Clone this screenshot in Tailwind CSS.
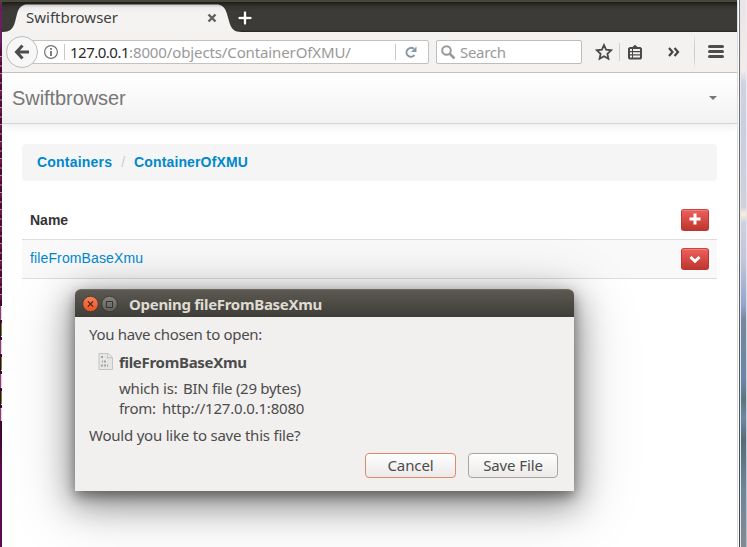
<!DOCTYPE html>
<html lang="en">
<head>
<meta charset="utf-8">
<title>Swiftbrowser</title>
<script src="https://cdn.jsdelivr.net/npm/@tailwindcss/browser@4"></script>
</head>
<body class="w-[747px] h-[547px] overflow-hidden bg-white font-['Noto_Sans','Open_Sans',sans-serif] text-[15px] leading-5 text-[#4c4c4c]">
<div class="relative flex w-[747px] h-[547px] overflow-hidden">

  <!-- desktop edge, left -->
  <div class="w-[2px] shrink-0 bg-[linear-gradient(#4a4840_0_2px,#6b1d5e_5px,#6d1f63_40px,#4a0a3f_55px,#3c0630_340px,#3f0734_440px,#5c0b50_470px,#5c0b50)]">
    <div class="mt-[50px] h-[250px] w-[2px] bg-[repeating-linear-gradient(#48103c_0_6px,#d8c4d2_6px_7px,#7a1f4c_7px_12px,#48103c_12px_15px,#b5627a_15px_17px)] opacity-70"></div>
    <div class="mt-[6px] flex h-[115px] w-[2px]">
      <div class="w-px bg-[repeating-linear-gradient(#7a3ab0_0_14px,#3c0630_14px_34px)]"></div>
      <div class="w-px bg-[repeating-linear-gradient(#fff_0_1px,#f9cf9c_1px_13px,#fff_13px_14px,#3c0630_14px_17px,#6a8a2a_17px_30px,#fff_30px_31px,#3c0630_31px_34px)]"></div>
    </div>
  </div>

  <!-- browser window -->
  <div class="w-[735px] shrink-0 flex flex-col">
    <!-- tab strip -->
    <div class="h-8 shrink-0 relative border-t-2 border-[#48473e] bg-[linear-gradient(#1d1c19,#33322d_4px,#3c3b37_9px,#3c3b37_28px,#24231f_30px)]">
      <svg class="absolute left-0 top-0" width="260" height="30" viewBox="0 0 260 30">
        <defs><linearGradient id="tab" x1="0" y1="0" x2="0" y2="1"><stop offset="0" stop-color="#c9c8c6"/><stop offset=".12" stop-color="#eeedec"/><stop offset=".3" stop-color="#f4f3f2"/><stop offset="1" stop-color="#f4f3f2"/></linearGradient></defs>
        <path d="M0 30C8 30 11 27 13 20L15 12C17 5 20 2.500 26 2.500H214C220 2.500 223 5 225 12L227 19C229 27 232 30 240 30Z" fill="url(#tab)"/>
        <path d="M206.500 12.500l7 7M213.500 12.500l-7 7" stroke="#5f5f5d" stroke-width="2.400"/>
        <path d="M243 9v14M236 16h14" stroke="#1f1e1c" stroke-width="4.500"/>
        <path d="M243 9.500v13M236.500 16h13" stroke="#fff" stroke-width="2.500"/>
      </svg>
      <div class="relative pl-6 pt-[5px] text-[15px] leading-5 text-[#3f3f3f] whitespace-nowrap">Swiftbrowser</div>
    </div>

    <!-- toolbar -->
    <div class="h-[41px] shrink-0 bg-[#f3f2f1] border-b border-[#c3c2c0] flex items-start pl-1 whitespace-nowrap">
      <div class="relative z-10 mt-1 w-8 h-8 shrink-0 rounded-full border border-[#bdbcba] bg-[#f8f7f7] flex items-center justify-center">
        <svg width="16" height="16" viewBox="0 0 16 16" fill="none" stroke="#4d4d4d" stroke-width="3"><path d="M8.500 1.500L2.500 8l6 6.500M3 8h12"/></svg>
      </div>
      <div class="-ml-[6px] mt-2 h-6 w-[397px] shrink-0 border border-[#c3c2c0] rounded-r-[2px] bg-white flex items-center pl-[10px]">
        <svg class="shrink-0" width="16" height="16" viewBox="0 0 16 16"><circle cx="8" cy="8" r="6.400" fill="none" stroke="#757575" stroke-width="1.200"/><path d="M8 7v5M8 4v1.800" stroke="#666" stroke-width="1.700"/></svg>
        <div class="ml-[5px] w-px h-4 bg-[#c8c8c8]"></div>
        <div class="ml-[5px] w-[325px] text-[15px] leading-5"><span class="text-[#2b2b2b] tracking-[-0.5px]">127.0.0.1</span><span class="text-[#999] tracking-[-0.12px]">:8000/objects/ContainerOfXMU/</span></div>
        <div class="w-px h-4 bg-[#c8c8c8]"></div>
        <svg class="ml-[8px]" width="14" height="14" viewBox="0 0 14 14"><path d="M10.500 10.200A4.500 4.500 0 1 1 9.800 3.800" fill="none" stroke="#8796a3" stroke-width="2"/><path d="M12.500 1.500V7H7Z" fill="#8796a3"/></svg>
      </div>
      <div class="ml-[7px] mt-2 h-6 w-[146px] shrink-0 border border-[#bfbebc] rounded-[2px] bg-white flex items-center pl-1">
        <svg width="15" height="15" viewBox="0 0 15 15" fill="none" stroke="#999"><circle cx="5.500" cy="5.500" r="4.300" stroke-width="2"/><path d="M8.500 8.500l5 5" stroke-width="2.500"/></svg>
        <div class="ml-1 leading-5 text-[#999] tracking-[-0.3px]">Search</div>
      </div>
      <svg class="ml-[13px] mt-[11px] shrink-0" width="18" height="18" viewBox="0 0 18 18"><path d="M9 2l2.100 4.700 5 .6-3.700 3.500 1 5L9 13.300 4.600 15.800l1-5L1.900 7.300l5-.6Z" fill="none" stroke="#4a4a4a" stroke-width="1.800"/></svg>
      <div class="ml-[6px] mt-[11px] w-px h-[18px] bg-[#cfcecc]"></div>
      <svg class="ml-[8px] mt-3 shrink-0" width="14" height="16" viewBox="0 0 14 16"><path d="M1.500 3H4.500L7 .8 9.500 3h3l1.500 1.500V14l-1 1.500H1L0 14V4.500Z" fill="#4a4a4a"/><path d="M2 5h2v2H2zM5 5h7v2H5zM2 8.200h2v2H2zM5 8.200h7v2H5zM2 11.400h2v2H2zM5 11.400h7v2H5z" fill="#f3f2f1"/></svg>
      <svg class="ml-[26px] mt-[15px] shrink-0" width="12" height="10" viewBox="0 0 12 10" fill="none" stroke="#444" stroke-width="2.200"><path d="M1 1l3.500 4L1 9M6.500 1L10 5 6.500 9"/></svg>
      <div class="ml-[14px] mt-[2px] w-px h-[35px] bg-[linear-gradient(#f3f2f1,#cfcecc_30%,#cfcecc_70%,#f3f2f1)]"></div>
      <svg class="ml-[13px] mt-[13px] shrink-0" width="17" height="13" viewBox="0 0 17 13"><path d="M1.500 1.500h13M1.500 6.500h13M1.500 11.500h13" stroke="#4d4d4d" stroke-width="3" stroke-linecap="round"/></svg>
    </div>

    <!-- page -->
    <div class="flex-1 min-h-0 bg-white overflow-hidden font-['Liberation_Sans',Arial,sans-serif] text-[14px]">
      <div class="h-[51px] flex items-center justify-between pl-[10px] pr-5 bg-[linear-gradient(#fff,#f2f2f2)] border-b border-[#d4d4d4] shadow-[0_1px_10px_rgba(0,0,0,0.1)]">
        <div class="text-[20px] text-[#777] tracking-[-0.07px]">Swiftbrowser</div>
        <svg width="8" height="4" viewBox="0 0 8 4"><path d="M0 0h8L4 4Z" fill="#777"/></svg>
      </div>
      <div class="mx-5 mt-5 h-[37px] rounded-[4px] bg-[#f5f5f5] px-[15px] pb-[2px] flex items-center font-bold text-[#0088cc]">
        <span class="tracking-[0.2px]">Containers</span><span class="mx-[9px] font-normal text-[#ccc]">/</span><span class="tracking-[0.14px]">ContainerOfXMU</span>
      </div>
      <div class="mx-5 mt-5 h-[38px] pl-2 pr-2 flex items-center justify-between font-bold text-[#333]">
        <span>Name</span>
        <div class="w-7 h-[22px] rounded-[3px] border border-[#bd362f] border-t-[#c9443d] bg-[linear-gradient(#ee5f5b,#bd362f)] shadow-[inset_0_1px_0_rgba(255,255,255,0.2)] flex items-center justify-center">
          <svg class="-mt-[2px]" width="12" height="12" viewBox="0 0 12 12"><path d="M6 .5v11M.5 6h11" stroke="#fff" stroke-width="3"/></svg>
        </div>
      </div>
      <div class="mx-5 h-10 pl-2 pr-2 flex items-center justify-between bg-[#f9f9f9] border-y border-[#ddd]">
        <span class="text-[#0088cc] -mt-[2px] tracking-[0.13px]">fileFromBaseXmu</span>
        <div class="w-7 h-[22px] rounded-[3px] border border-[#bd362f] border-t-[#c9443d] bg-[linear-gradient(#ee5f5b,#bd362f)] shadow-[inset_0_1px_0_rgba(255,255,255,0.2)] flex items-center justify-center">
          <svg width="12" height="9" viewBox="0 0 12 9"><path d="M1.500 2L6 6.300 10.500 2" fill="none" stroke="#fff" stroke-width="3"/></svg>
        </div>
      </div>
    </div>
  </div>

  <!-- desktop edge, right -->
  <div class="w-[10px] shrink-0 flex">
    <div class="w-px bg-[#dddcdc]"></div>
    <div class="w-px bg-white"></div>
    <div class="w-px bg-[linear-gradient(#74777a,#5c6068_50%,#3f4a58)]"></div>
    <div class="w-px bg-[#e4e6ea]"></div>
    <div class="w-[5px] bg-[linear-gradient(#e8e4ea,#f3e8e6_40px,#f3ece8_70px,#d0d3e0_83px,#c8cfe0_130px,#d0d0dd_207px,#fbeedd_214px,#cdd0de_223px,#c0c6de_260px,#94a5cc_305px,#74879f_320px,#6b86a5_380px,#5a7580_400px,#6d87a3_418px,#536c78_440px,#6d859b_490px,#85898f)]"></div>
    <div class="w-px bg-[linear-gradient(#f0eef0,#e0e2ea_50%,#b4bcc6)]"></div>
  </div>

  <!-- download dialog -->
  <div class="absolute left-[75px] top-[289px] w-[499px] h-[202px] rounded-t-[6px] bg-[#f1f0ef] shadow-[0_10px_32px_3px_rgba(0,0,0,0.4),0_12px_64px_8px_rgba(0,0,0,0.16),0_5px_12px_rgba(0,0,0,0.36)] whitespace-nowrap">
    <div class="h-7 rounded-t-[6px] bg-[linear-gradient(#5b5951,#3e3d38)] border-t border-[#6d6b62] flex items-center pl-[7px]">
      <svg width="36" height="18" viewBox="0 0 36 18">
        <defs><linearGradient id="c" x1="0" y1="0" x2="0" y2="1"><stop offset="0" stop-color="#f4845c"/><stop offset="1" stop-color="#e8501f"/></linearGradient><linearGradient id="m" x1="0" y1="0" x2="0" y2="1"><stop offset="0" stop-color="#85837b"/><stop offset="1" stop-color="#605e57"/></linearGradient></defs>
        <circle cx="8.500" cy="9" r="7.800" fill="url(#c)" stroke="#38352f" stroke-width=".8"/><path d="M5.900 6.400l5.200 5.200M11.100 6.400l-5.200 5.200" stroke="#4b2414" stroke-width="1.200"/>
        <circle cx="27.500" cy="9" r="7.800" fill="url(#m)" stroke="#38352f" stroke-width=".8"/><path d="M24.500 6.500h6v6h-6z" fill="none" stroke="#35342f" stroke-width="1"/>
      </svg>
      <div class="ml-[11px] font-bold text-[15px] tracking-[-0.3px] text-[#dfdbd2]">Opening fileFromBaseXmu</div>
    </div>
    <div class="pl-[14px] pt-[7px]">
      <div class="tracking-[-0.31px]">You have chosen to open:</div>
      <div class="mt-2 pl-[9px] h-5 flex items-center">
        <svg class="-mt-[2px]" width="15" height="17" viewBox="0 0 15 17"><path d="M1 .5h9.500l4 4v12H1Z" fill="#e6e6e5" stroke="#c4c4c3"/><path d="M9.500 1q1 3-.5 4 3-1 5 0" fill="#fafafa" stroke="#bcbcbb"/><g fill="none" stroke="#a4a4a3"><path d="M3 4h2M4 8.500h1M6 8.500h2M3 12.500h2M6 12.500h2M9 12.500h1" stroke-width="2"/></g></svg>
        <div class="ml-[6px] font-bold tracking-[-0.3px]">fileFromBaseXmu</div>
      </div>
      <div class="mt-[6px] pl-[30px] flex"><span class="w-16 tracking-[-0.2px]">which is:</span><span class="tracking-[-0.28px]">BIN file (29 bytes)</span></div>
      <div class="pl-[30px] flex"><span class="w-[43px] tracking-[-0.3px]">from:</span><span class="tracking-[-0.2px]">http://127.0.0.1:8080</span></div>
      <div class="mt-[7px] tracking-[-0.22px]">Would you like to save this file?</div>
    </div>
    <div class="mt-2 pr-4 flex justify-end gap-3">
      <div class="w-[91px] h-[25px] pb-px rounded-[4px] border border-[#dd8a6b] bg-[linear-gradient(#fefefe,#ebeae9)] flex items-center justify-center tracking-[-0.1px]">Cancel</div>
      <div class="w-[90px] h-[25px] pb-px rounded-[4px] border border-[#a7a6a4] bg-[linear-gradient(#fefefe,#ebeae9)] flex items-center justify-center tracking-[-0.1px]">Save File</div>
    </div>
  </div>
</div>
</body>
</html>
